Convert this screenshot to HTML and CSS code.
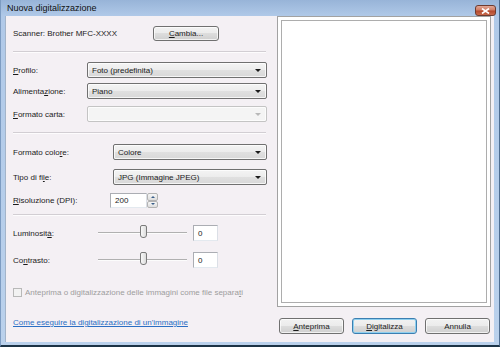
FILE: index.html
```html
<!DOCTYPE html>
<html lang="it">
<head>
    <meta charset="UTF-8">
    <meta name="viewport" content="width=device-width, initial-scale=1.0">
    <title>Nuova digitalizzazione</title>
    <link rel="stylesheet" href="styles.css">
</head>
<body>
    <div class="window">
        <div class="titlebar">
            <span class="title">Nuova digitalizzazione</span>
            <span class="close">
                <svg width="9" height="6" viewBox="0 0 9 6"><path d="M1 0.5 L8 5.5 M8 0.5 L1 5.5" stroke="#fff" stroke-width="1.6"/></svg>
            </span>
        </div>
        <div class="client">
            <div class="settings">
                <div class="row row-scanner">
                    <span class="label label-scanner">Scanner: Brother MFC-XXXX</span>
                    <span class="btn btn-change"><u>C</u>ambia...</span>
                </div>
                <div class="sep sep-1"></div>

                <div class="row row-profile">
                    <span class="label label-short"><u>P</u>rofilo:</span>
                    <span class="combo combo-short"><span>Foto (predefinita)</span><i class="arrow"></i></span>
                </div>
                <div class="row row-feed">
                    <span class="label label-short">Alimenta<u>z</u>ione:</span>
                    <span class="combo combo-short"><span>Piano</span><i class="arrow"></i></span>
                </div>
                <div class="row row-paper">
                    <span class="label label-short"><u>F</u>ormato carta:</span>
                    <span class="combo combo-short combo-disabled"><span></span><i class="arrow"></i></span>
                </div>
                <div class="sep sep-2"></div>

                <div class="row row-color">
                    <span class="label label-wide">Formato colo<u>r</u>e:</span>
                    <span class="combo combo-wide"><span>Colore</span><i class="arrow"></i></span>
                </div>
                <div class="row row-type">
                    <span class="label label-wide">Tipo di fi<u>l</u>e:</span>
                    <span class="combo combo-wide"><span>JPG (Immagine JPEG)</span><i class="arrow"></i></span>
                </div>
                <div class="row row-dpi">
                    <span class="label label-dpi"><u>R</u>isoluzione (DPI):</span>
                    <span class="spin">
                        <span class="field field-dpi">200</span>
                        <span class="spin-buttons">
                            <span class="spin-btn"><i class="tri tri-up"></i></span>
                            <span class="spin-btn"><i class="tri tri-down"></i></span>
                        </span>
                    </span>
                </div>
                <div class="sep sep-3"></div>

                <div class="row row-bright">
                    <span class="label label-slider">Luminosit<u>à</u>:</span>
                    <span class="slider"><span class="track"></span><span class="thumb"></span></span>
                    <span class="field field-small">0</span>
                </div>
                <div class="row row-contrast">
                    <span class="label label-slider">Co<u>n</u>trasto:</span>
                    <span class="slider"><span class="track"></span><span class="thumb"></span></span>
                    <span class="field field-small">0</span>
                </div>

                <div class="row row-check">
                    <span class="checkbox"></span>
                    <span class="check-text">Anteprima o digitalizzazione delle immagini come file separa<u>t</u>i</span>
                </div>

                <a class="help-link" href="#">Come eseguire la digitalizzazione di un'immagine</a>
            </div>

            <div class="side">
                <div class="preview"><div class="preview-inner"></div></div>
                <div class="actions">
                    <span class="btn"><u>A</u>nteprima</span>
                    <span class="btn btn-default"><u>D</u>igitalizza</span>
                    <span class="btn">Annulla</span>
                </div>
            </div>
        </div>
    </div>
</body>
</html>
```

FILE: styles.css
```css
* {
    margin: 0;
    padding: 0;
    box-sizing: border-box;
}
body {
    font-family: 'Liberation Sans', Arial, sans-serif;
    font-size: 8px;
    color: #1b1b1b;
    background: #fff;
}
u {
    text-decoration: underline;
    text-underline-offset: 1px;
}

/* window frame */
.window {
    width: 500px;
    height: 347px;
    display: flex;
    flex-direction: column;
    background: linear-gradient(#98b4d8 0, #b0c9e8 16px, #bad1ec 100%);
    border-left: 1px solid #7d9cc2;
    border-right: 1px solid #4f6d90;
    border-bottom: 2px solid #1c3346;
    padding: 0 5px 3px 4px;
}
.titlebar {
    height: 16px;
    display: flex;
    justify-content: space-between;
    align-items: flex-start;
}
.title {
    font-size: 9px;
    line-height: 16px;
    padding-left: 2px;
    color: #101010;
}
.close {
    margin-top: 5px;
    margin-right: -2px;
    width: 21px;
    height: 11px;
    border: 1px solid #6e3b2f;
    border-radius: 3px;
    background: linear-gradient(#e2a796 0, #cf7c64 45%, #b4482c 55%, #c86a4c 100%);
    display: flex;
    align-items: center;
    justify-content: center;
}
.close svg {
    display: block;
}
.client {
    flex: 1;
    display: flex;
    background: #f4f0f4;
    border-left: 1px solid #a3b4c9;
}

/* left settings column */
.settings {
    width: 271px;
    padding: 0 10px 0 7px;
    display: flex;
    flex-direction: column;
}
.row {
    display: flex;
    align-items: center;
}
.label {
    flex-shrink: 0;
    white-space: nowrap;
}
.label-scanner { width: 140px; }
.label-short { width: 74px; }
.label-wide { width: 100px; }
.label-dpi { width: 97px; }
.label-slider { width: 85px; }

.row-scanner { margin-top: 10px; height: 15px; }
.row-profile { margin-top: 9px; height: 16px; }
.row-feed { margin-top: 5px; height: 16px; }
.row-paper { margin-top: 7px; height: 16px; }
.row-color { margin-top: 10px; height: 16px; }
.row-type { margin-top: 9px; height: 16px; }
.row-dpi { margin-top: 8px; height: 15px; }
.row-bright { margin-top: 9px; height: 16px; }
.row-contrast { margin-top: 11px; height: 16px; }
.row-check { margin-top: 19px; height: 10px; }

.sep {
    height: 2px;
    border-top: 1px solid #d2ced3;
    border-bottom: 1px solid #fdfcfd;
    margin-right: 1px;
}
.sep-1 { margin-top: 10px; }
.sep-2 { margin-top: 10px; }
.sep-3 { margin-top: 6px; }

/* buttons */
.btn {
    display: flex;
    align-items: center;
    justify-content: center;
    width: 65px;
    height: 16px;
    border: 1px solid #707070;
    border-radius: 3px;
    background: linear-gradient(#f2f2f2 0, #ebebeb 50%, #dddddd 50%, #cfcfcf 100%);
    box-shadow: inset 0 0 0 1px rgba(255, 255, 255, 0.7);
    color: #1b1b1b;
}
.btn-change {
    width: 66px;
    height: 15px;
}
.btn-default {
    border-color: #3c7fb1;
    box-shadow: inset 0 0 0 1px #8fd0ef;
}

/* combo boxes */
.combo {
    display: flex;
    align-items: center;
    justify-content: space-between;
    height: 16px;
    border: 1px solid #707070;
    border-radius: 2px;
    background: linear-gradient(#f4f4f4 0, #ececec 50%, #e0e0e0 50%, #d8d8d8 100%);
    box-shadow: inset 0 0 0 1px rgba(255, 255, 255, 0.75);
    padding: 0 4px 0 4px;
}
.combo-short { width: 180px; }
.combo-wide { width: 154px; }
.combo-disabled {
    border-color: #c4c4c4;
    background: #f4f4f4;
}
.arrow {
    width: 0;
    height: 0;
    border-left: 3px solid transparent;
    border-right: 3px solid transparent;
    border-top: 3px solid #1b1b1b;
    margin-right: 1px;
}
.combo-disabled .arrow {
    border-top-color: #b8b8b8;
}

/* text fields */
.field {
    display: flex;
    align-items: center;
    height: 16px;
    background: #fff;
    border: 1px solid #abadb3;
    border-right-color: #dbdfe6;
    border-bottom-color: #e3e9ef;
    padding-left: 4px;
}
.field-dpi {
    width: 37px;
    height: 15px;
}
.field-small {
    width: 25px;
    margin-left: 6px;
}
.spin {
    display: flex;
}
.spin-buttons {
    display: flex;
    flex-direction: column;
    width: 11px;
    height: 15px;
}
.spin-btn {
    flex: 1;
    display: flex;
    align-items: center;
    justify-content: center;
    border: 1px solid #b3b3b3;
    border-radius: 2px;
    background: linear-gradient(#f6f6f6, #dedede);
}
.tri {
    width: 0;
    height: 0;
    border-left: 2px solid transparent;
    border-right: 2px solid transparent;
}
.tri-up { border-bottom: 2px solid #3a5f8a; }
.tri-down { border-top: 2px solid #3a5f8a; }

/* sliders */
.slider {
    position: relative;
    width: 89px;
    height: 16px;
    display: flex;
    align-items: center;
}
.track {
    width: 100%;
    height: 2px;
    border-top: 1px solid #b0b0b0;
    border-bottom: 1px solid #fcfcfc;
}
.thumb {
    position: absolute;
    left: 42px;
    top: 0;
    width: 7px;
    height: 13px;
    border: 1px solid #7a7a7a;
    border-radius: 2px 2px 3px 3px;
    background: linear-gradient(90deg, #f8f8f8, #dcdcdc);
}

/* checkbox */
.checkbox {
    width: 9px;
    height: 9px;
    border: 1px solid #b8b8b8;
    background: #f2f2f2;
}
.check-text {
    margin-left: 3px;
    color: #9d9d9d;
    white-space: nowrap;
}

.help-link {
    margin-top: 21px;
    color: #2b6fc4;
    text-decoration: underline;
    text-underline-offset: 1px;
    line-height: 10px;
    align-self: flex-start;
}

/* right column */
.side {
    flex: 1;
    display: flex;
    flex-direction: column;
    padding-right: 3px;
}
.preview {
    flex: 1;
    background: #fff;
    border: 1px solid #a2a2a2;
    padding: 3px;
}
.preview-inner {
    height: 100%;
    border: 1px solid #adadad;
}
.actions {
    display: flex;
    gap: 8px;
    padding-left: 2px;
    margin-top: 11px;
    margin-bottom: 8px;
}
```
